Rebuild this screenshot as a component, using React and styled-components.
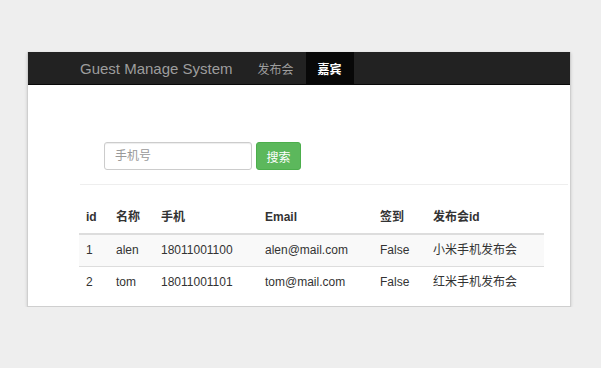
import React from "react";
import styled, { createGlobalStyle } from "styled-components";

const guests = [
  { id: 1, name: "alen", phone: "18011001100", email: "alen@mail.com", sign: "False", event: "小米手机发布会" },
  { id: 2, name: "tom", phone: "18011001101", email: "tom@mail.com", sign: "False", event: "红米手机发布会" },
];

const columns = [
  { label: "id", width: 30 },
  { label: "名称", width: 45 },
  { label: "手机", width: 104 },
  { label: "Email", width: 115 },
  { label: "签到", width: 53 },
  { label: "发布会id", width: 118 },
];

const App = () => {
  return (
    <>
      <GlobalStyle />
      <Page>
        <Window>
          <Navbar>
            <Brand>Guest Manage System</Brand>
            <NavItem>发布会</NavItem>
            <NavItem $active>嘉宾</NavItem>
          </Navbar>
          <Container>
            <SearchForm>
              <SearchInput placeholder="手机号" />
              <SearchButton>搜索</SearchButton>
            </SearchForm>
            <Divider />
            <Table>
              <colgroup>
                {columns.map((c) => (
                  <col key={c.label} style={{ width: c.width }} />
                ))}
              </colgroup>
              <thead>
                <tr>
                  {columns.map((c) => (
                    <Th key={c.label}>{c.label}</Th>
                  ))}
                </tr>
              </thead>
              <tbody>
                {guests.map((g, i) => (
                  <Row key={g.id} $striped={i % 2 === 0}>
                    <Td>{g.id}</Td>
                    <Td>{g.name}</Td>
                    <Td>{g.phone}</Td>
                    <Td>{g.email}</Td>
                    <Td>{g.sign}</Td>
                    <Td>{g.event}</Td>
                  </Row>
                ))}
              </tbody>
            </Table>
          </Container>
        </Window>
      </Page>
    </>
  );
};

export default App;

const GlobalStyle = createGlobalStyle`
  body {
    margin: 0;
    background: #eeeeee;
    font-family: "Liberation Sans", Arial, "Noto Sans CJK SC", sans-serif;
    font-size: 12px;
    color: #333;
  }
`;

const Page = styled.div`
  padding: 52px 0 0 27px;
`;

const Window = styled.div`
  width: 542px;
  height: 254px;
  background: #fff;
  border: 1px solid #cfcfcf;
  border-top: none;
  box-shadow: 0 1px 3px rgba(0, 0, 0, 0.15);
`;

const Navbar = styled.div`
  display: flex;
  align-items: stretch;
  height: 32px;
  background: #222;
  border-bottom: 1px solid #080808;
  padding-left: 52px;
`;

const Brand = styled.div`
  display: flex;
  align-items: center;
  font-size: 15px;
  color: #9d9d9d;
  margin-right: 13px;
`;

const NavItem = styled.div`
  display: flex;
  align-items: center;
  padding: 0 12px;
  font-size: 12px;
  color: ${(p) => (p.$active ? "#fff" : "#9d9d9d")};
  background: ${(p) => (p.$active ? "#080808" : "transparent")};
  font-weight: ${(p) => (p.$active ? "bold" : "normal")};
`;

const Container = styled.div`
  padding: 57px 2px 0 51px;
`;

const SearchForm = styled.div`
  display: flex;
  gap: 4px;
  margin-left: 25px;
`;

const SearchInput = styled.input`
  box-sizing: border-box;
  width: 148px;
  height: 28px;
  padding: 0 10px;
  border: 1px solid #ccc;
  border-radius: 3px;
  font-family: inherit;
  font-size: 12px;
  color: #555;
  box-shadow: inset 0 1px 1px rgba(0, 0, 0, 0.075);
  &::placeholder {
    color: #999;
  }
`;

const SearchButton = styled.button`
  box-sizing: border-box;
  width: 45px;
  height: 28px;
  border: 1px solid #4cae4c;
  border-radius: 3px;
  background: #5cb85c;
  color: #fff;
  font-family: inherit;
  font-size: 12px;
  padding: 0;
`;

const Divider = styled.div`
  height: 1px;
  background: #eee;
  margin: 14px 0 17px 1px;
`;

const Table = styled.table`
  width: 465px;
  border-collapse: collapse;
  table-layout: fixed;
`;

const Th = styled.th`
  text-align: left;
  font-weight: bold;
  padding: 7px;
  line-height: 17px;
  border-bottom: 2px solid #ddd;
  white-space: nowrap;
`;

const Row = styled.tr`
  background: ${(p) => (p.$striped ? "#f9f9f9" : "#fff")};
`;

const Td = styled.td`
  padding: 7px;
  line-height: 17px;
  border-top: 1px solid #ddd;
  white-space: nowrap;
`;
